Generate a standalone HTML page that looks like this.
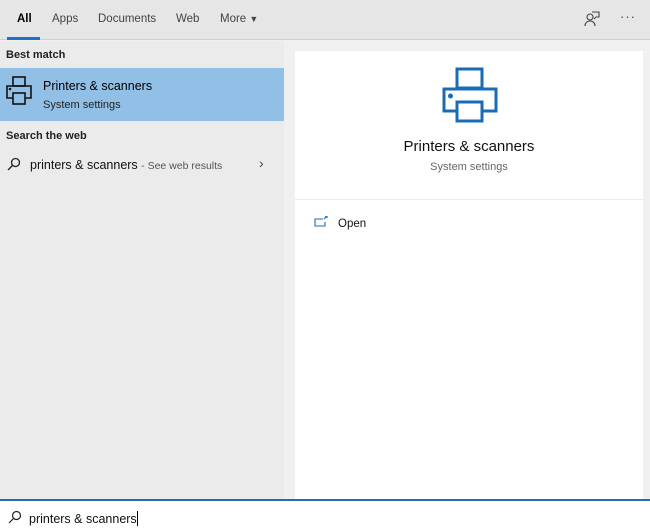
<!DOCTYPE html>
<html><head><meta charset="utf-8"><style>
*{margin:0;padding:0;box-sizing:border-box}
body{width:650px;height:532px;overflow:hidden;font-family:"Liberation Sans",sans-serif;background:#f0f0f0;position:relative;color:#000}
.top{position:absolute;left:0;top:0;width:650px;height:40px;background:#e6e6e6;border-bottom:1px solid #d0d0d0}
.tab{position:absolute;top:13px;font-size:11.5px;color:#444}
.left{position:absolute;left:0;top:41px;width:284px;height:459px;background:#ebebeb}
.card{position:absolute;left:295px;top:51px;width:348px;height:449px;background:#fff}
.hl{position:absolute;left:0;top:68px;width:284px;height:53px;background:#92bfe6}
.sb{position:absolute;left:0;top:499px;width:650px;height:33px;background:#fff;border-top:2px solid #2e6e9e}
</style></head><body>
<div class="top">
<div class="tab" style="left:17px;color:#000;font-weight:bold">All</div>
<div style="position:absolute;left:7px;top:37px;width:33px;height:3px;background:#1a73c8"></div>
<div class="tab" style="left:52px">Apps</div>
<div class="tab" style="left:98px">Documents</div>
<div class="tab" style="left:176px">Web</div>
<div class="tab" style="left:220px">More <span style="font-size:9px">&#9660;</span></div>
<svg style="position:absolute;left:584px;top:11px" width="16" height="16" viewBox="0 0 16 16" fill="none" stroke="#444" stroke-width="1.1"><circle cx="6" cy="6" r="3"/><path d="M1 15c0-3 2-5 5-5s5 2 5 5M8 1h7v5h-3l-2 2"/></svg>
<div style="position:absolute;left:620px;top:9px;font-size:13px;color:#444;letter-spacing:1px">···</div>
</div>
<div class="left"></div>
<div class="hl"></div>
<div style="position:absolute;left:6px;top:49px;font-size:11px;font-weight:bold;color:#222">Best match</div>
<svg style="position:absolute;left:5px;top:76px" width="28" height="30" viewBox="0 0 28 30" fill="none" stroke="#111" stroke-width="1.6"><rect x="8" y="1" width="12" height="9"/><path d="M8 22H2V10h24v12h-6"/><rect x="8" y="17" width="12" height="11"/><circle cx="5" cy="13" r=".5" fill="#111"/></svg>
<div style="position:absolute;left:43px;top:79px;font-size:12.5px;color:#000">Printers &amp; scanners</div>
<div style="position:absolute;left:43px;top:99px;font-size:11px;color:#222">System settings</div>
<div style="position:absolute;left:6px;top:130px;font-size:11px;font-weight:bold;color:#222">Search the web</div>
<svg style="position:absolute;left:7px;top:157px" width="14" height="14" viewBox="0 0 14 14" fill="none" stroke="#222" stroke-width="1.3"><circle cx="8.5" cy="5.5" r="4"/><path d="M5.5 8.5L1 13"/></svg>
<div style="position:absolute;left:30px;top:158px;font-size:12.5px;color:#111">printers &amp; scanners <span style="font-size:10.5px;color:#555">- See web results</span></div>
<div style="position:absolute;left:259px;top:155px;font-size:14px;color:#444">&#8250;</div>
<div class="card"></div>
<svg style="position:absolute;left:442px;top:67px" width="56" height="56" viewBox="0 0 56 56" fill="none" stroke="#1a6bb5" stroke-width="3"><rect x="15" y="2" width="25" height="19"/><path d="M15 44H2V22h52v22H40"/><rect x="15" y="35" width="25" height="19"/><circle cx="8.5" cy="29" r="1" fill="#1a6bb5"/></svg>
<div style="position:absolute;left:295px;width:348px;top:138px;text-align:center;font-size:15px;color:#111">Printers &amp; scanners</div>
<div style="position:absolute;left:295px;width:348px;top:161px;text-align:center;font-size:11px;color:#666">System settings</div>
<div style="position:absolute;left:295px;top:199px;width:348px;height:1px;background:#ececec"></div>
<svg style="position:absolute;left:314px;top:216px" width="14" height="12" viewBox="0 0 14 12" fill="none" stroke="#1a6bb5" stroke-width="1.1"><path d="M9 3H1v7h10V6"/><path d="M10 3l3-3M11 0h2v2"/></svg>
<div style="position:absolute;left:338px;top:218px;font-size:11.5px;color:#111">Open</div>
<div class="sb">
<svg style="position:absolute;left:8px;top:9px" width="14" height="14" viewBox="0 0 14 14" fill="none" stroke="#222" stroke-width="1.2"><circle cx="8.5" cy="5.5" r="4"/><path d="M5.5 8.5L1 13"/></svg>
<div style="position:absolute;left:29px;top:10px;font-size:12.5px;color:#111">printers &amp; scanners<span style="display:inline-block;width:1px;height:15px;background:#000;vertical-align:-3px"></span></div>
</div>
</body></html>
